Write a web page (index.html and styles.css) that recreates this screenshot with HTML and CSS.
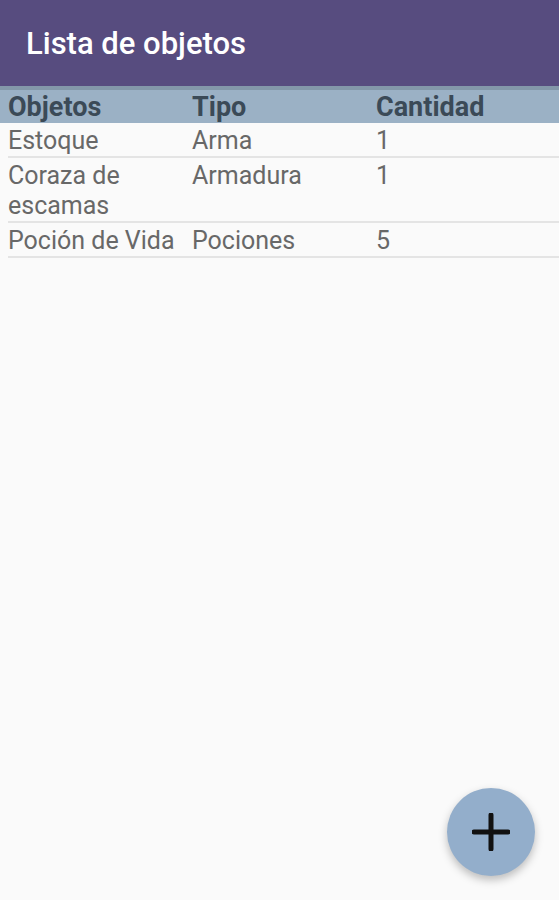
FILE: index.html
```html
<!DOCTYPE html>
<html lang="es">
<head>
  <meta charset="UTF-8" />
  <meta name="viewport" content="width=device-width, initial-scale=1.0"/>
  <title>Lista de objetos</title>
  <link rel="stylesheet" href="styles.css">
</head>
<body>

  <header class="appbar">
    <h1>Lista de objetos</h1>
  </header>

  <div class="tabla">
    <div class="fila cabecera">
      <span>Objetos</span>
      <span>Tipo</span>
      <span>Cantidad</span>
    </div>
    <div class="fila">
      <span>Estoque</span>
      <span>Arma</span>
      <span>1</span>
    </div>
    <div class="fila">
      <span>Coraza de escamas</span>
      <span>Armadura</span>
      <span>1</span>
    </div>
    <div class="fila">
      <span>Poción de Vida</span>
      <span>Pociones</span>
      <span>5</span>
    </div>
  </div>

  <button class="fab" type="button" aria-label="Añadir">
    <svg width="38" height="38" viewBox="0 0 38 38">
      <path d="M19 2 V36 M2 19 H36" stroke="#111" stroke-width="5" stroke-linecap="round" fill="none"/>
    </svg>
  </button>

</body>
</html>
```

FILE: styles.css
```css
:root {
  --purple: #574c7f;
  --steel: #9bb1c5;
  --fab: #93aecb;
  --bg: #fafafa;
}

* {
  box-sizing: border-box;
}

body {
  margin: 0;
  min-height: 100vh;
  background-color: var(--bg);
  font-family: Roboto, 'Noto Sans', sans-serif;
}

.appbar {
  height: 86px;
  background-color: var(--purple);
  display: flex;
  align-items: center;
  padding: 0 26px;
}

.appbar h1 {
  margin: 0;
  color: #fff;
  font-size: 31px;
  font-weight: 500;
}

.fila {
  display: grid;
  grid-template-columns: 184px 184px 1fr;
  margin-left: 8px;
  padding: 3px 0 0;
  border-bottom: 2px solid #e4e4e4;
  font-size: 25px;
  line-height: 30px;
  color: #686868;
}

.fila span {
  padding-right: 4px;
}

.cabecera {
  margin-left: 0;
  padding: 2px 0 1px 8px;
  background-color: var(--steel);
  border-top: 4px solid #8397a9;
  border-bottom: none;
  color: #3b4a57;
  font-size: 27px;
  font-weight: 700;
}

.fab {
  position: fixed;
  right: 24px;
  bottom: 24px;
  width: 88px;
  height: 88px;
  border: none;
  border-radius: 50%;
  background-color: var(--fab);
  box-shadow: 0 4px 8px rgba(0, 0, 0, 0.25);
  display: flex;
  align-items: center;
  justify-content: center;
  padding: 0;
  cursor: pointer;
}
```
